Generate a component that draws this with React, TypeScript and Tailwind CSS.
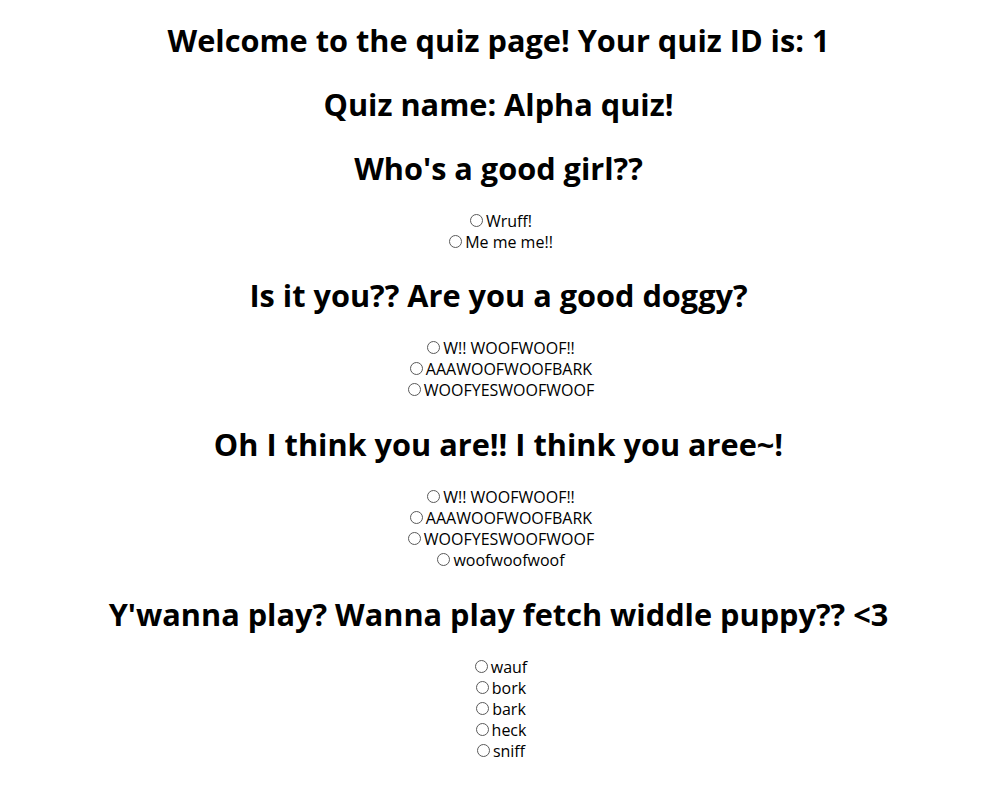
import React from 'react';

type Question = {
  title: string;
  answers: string[];
};

const questions: Question[] = [
  { title: "Who's a good girl??", answers: ['Wruff!', 'Me me me!!'] },
  {
    title: 'Is it you?? Are you a good doggy?',
    answers: ['W!! WOOFWOOF!!', 'AAAWOOFWOOFBARK', 'WOOFYESWOOFWOOF'],
  },
  {
    title: 'Oh I think you are!! I think you aree~!',
    answers: ['W!! WOOFWOOF!!', 'AAAWOOFWOOFBARK', 'WOOFYESWOOFWOOF', 'woofwoofwoof'],
  },
  {
    title: "Y'wanna play? Wanna play fetch widdle puppy?? <3",
    answers: ['wauf', 'bork', 'bark', 'heck', 'sniff'],
  },
];

function Heading({ children, first }: { children: React.ReactNode; first?: boolean }) {
  return (
    <h1
      className={
        first
          ? 'mt-[18.5px] mb-[21.6px] text-[30.7px] font-bold leading-[42.5px] text-black'
          : 'my-[21.6px] text-[30.7px] font-bold leading-[42.5px] text-black'
      }
    >
      {children}
    </h1>
  );
}

function QuestionBlock({ q, index }: { q: Question; index: number }) {
  return (
    <div>
      <Heading>{q.title}</Heading>
      <div className="text-[16px] leading-[21px]">
        {q.answers.map((a, i) => (
          <div key={i}>
            <label>
              <input
                type="radio"
                name={`q${index}`}
                value={i}
                className="ml-[5px] mr-[3px] mt-[3px] inline-block size-[13px] appearance-none rounded-full border border-[#5a5a5a] bg-white align-baseline"
              />
              {a}
            </label>
          </div>
        ))}
      </div>
    </div>
  );
}

export default function App() {
  return (
    <div
      className="min-h-screen bg-white pl-[15px] text-center text-black"
      style={{ fontFamily: '"Open Sans", "Noto Sans", sans-serif' }}
    >
      <div className="flow-root">
        <Heading first>Welcome to the quiz page! Your quiz ID is: 1</Heading>
        <Heading>Quiz name: Alpha quiz!</Heading>
        {questions.map((q, i) => (
          <QuestionBlock key={i} q={q} index={i} />
        ))}
      </div>
    </div>
  );
}
